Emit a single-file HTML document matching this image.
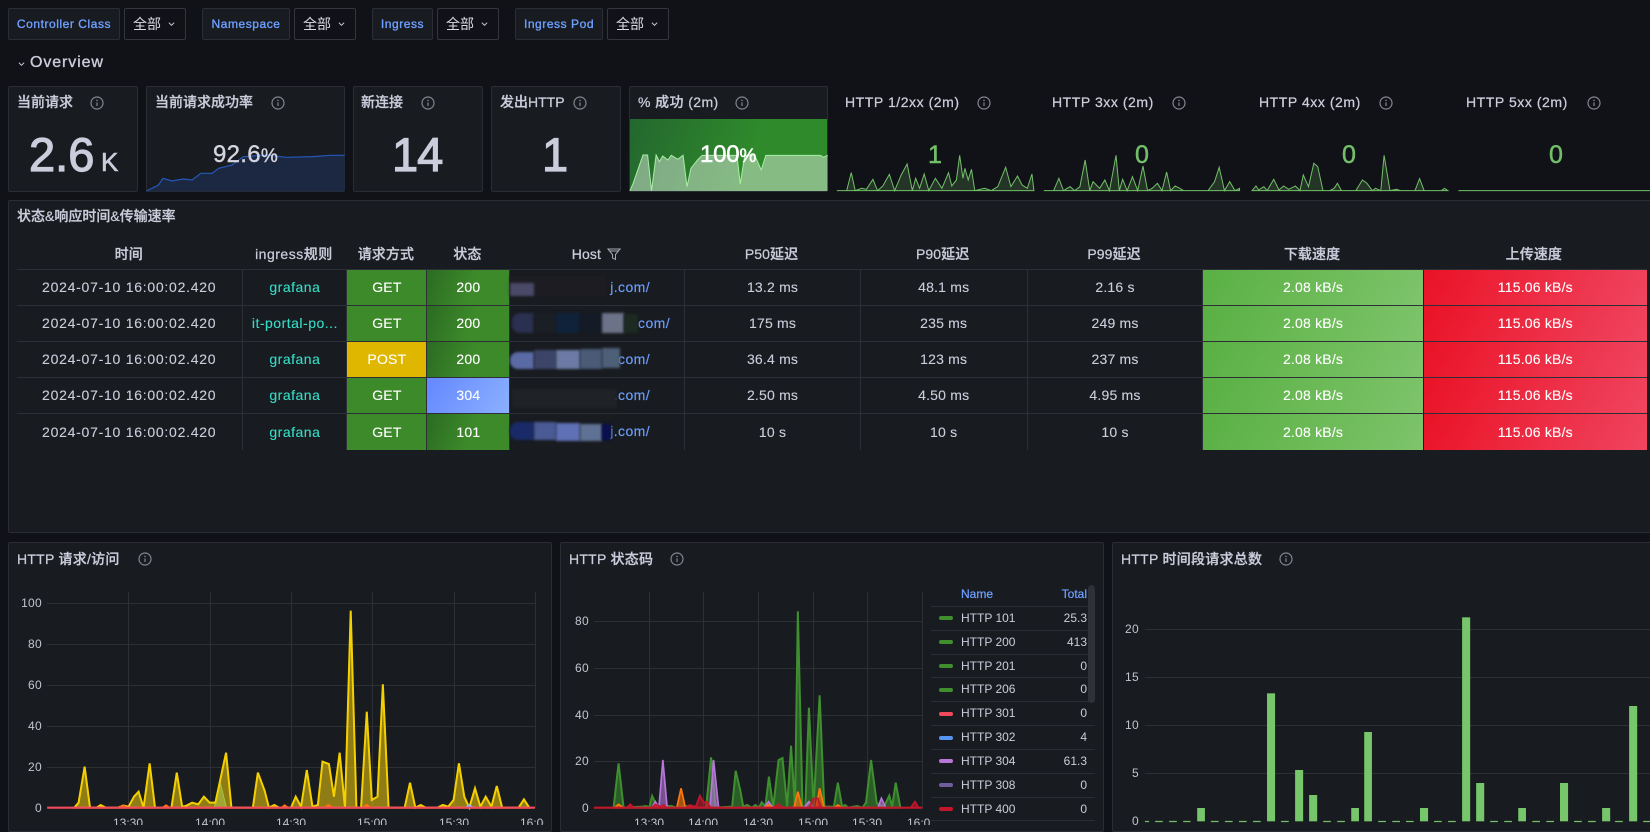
<!DOCTYPE html>
<html lang="zh"><head><meta charset="utf-8"><title>Ingress Overview</title>
<style>
*{box-sizing:border-box}
html,body{margin:0;padding:0;width:1650px;height:825px;overflow:hidden;background:#111217;color:#ccccdc;font-family:"Liberation Sans","Noto Sans CJK SC",sans-serif;font-size:14px}
.a{position:absolute;white-space:nowrap}
.lab{position:absolute;top:8px;height:32px;background:#181b1f;border:1px solid #2b2e34;border-radius:2px;color:#6e9fff;font-size:12px;line-height:30px;text-align:center;-webkit-text-stroke:.35px #6e9fff;letter-spacing:.55px}
.sel{position:absolute;top:8px;height:32px;background:#111217;border:1px solid #33363c;border-radius:2px;color:#dcdce4;font-size:14px;line-height:30px;padding-left:8px}
.sel svg{position:absolute;right:10px;top:12px}
.panel{position:absolute;background:#181b1f;border:1px solid #2a2d33;border-radius:2px}
.t{position:absolute;font-size:14px;font-weight:500;color:#ccccdc;white-space:nowrap;line-height:18px;letter-spacing:.4px;-webkit-text-stroke:.25px #ccccdc}
.big{position:absolute;white-space:nowrap;font-size:47px;line-height:48px;color:#ccccdc;-webkit-text-stroke:1.2px #ccccdc}
.v{position:absolute;font-size:25px;line-height:28px;color:#73bf69;-webkit-text-stroke:.5px #73bf69}
table{position:absolute;left:17px;top:238px;border-collapse:separate;border-spacing:0;table-layout:fixed;width:1630px}
th{height:32px;border-bottom:1px solid #2c2f35;font-weight:500;color:#ccccdc;font-size:14px;padding:0 3px 0 0;text-align:center;letter-spacing:.1px;-webkit-text-stroke:.25px #ccccdc}
td{height:36px;border-bottom:1px solid #2c2f35;border-right:1px solid #2c2f35;text-align:center;padding:0 0 1px;font-size:14px;color:#ccccdc;letter-spacing:.2px;white-space:nowrap;overflow:hidden;-webkit-text-stroke:.12px currentColor}
tr:last-child td{border-bottom:0}
td.tm{letter-spacing:.74px;padding-right:1px}
td.ing{color:#37dcc6;letter-spacing:.5px}
td.g{background:#3d8a2a;color:#fff}
td.y{background:#dfb700;color:#fff}
td.s{background:linear-gradient(110deg,#2b6b22,#3d8a2a 55%);color:#fff}
td.b{background:linear-gradient(120deg,#6488ff,#8bb0ff);color:#fff}
td.d{background:linear-gradient(120deg,#59b043,#7ec46b);color:#fff;border-right-color:#181b1f}
td.u{background:linear-gradient(120deg,#ea1226,#f04560);color:#fff;border-right:0}
.url{position:absolute;color:#6e9fff;font-size:14px;letter-spacing:.4px;text-align:right;line-height:18px;white-space:nowrap;-webkit-text-stroke:.15px #6e9fff}
.bl{position:absolute;filter:blur(1.2px)}
.axis{font-size:12px;fill:#c4c4d0;font-family:"Liberation Sans",sans-serif}
.lg{position:absolute;font-size:12px;color:#ccccdc;line-height:14px;white-space:nowrap}
.ln{position:absolute;left:931px;width:164px;height:1px;background:#2a2d33}
.sw{position:absolute;left:939px;width:14px;height:4px;border-radius:2px}
</style></head><body>

<div class="lab" style="left:8px;width:112px">Controller Class</div>
<div class="sel" style="left:124px;width:62px">全部<svg width="7" height="6" viewBox="0 0 8 6"><path d="M1 1.5 4 4.5 7 1.5" fill="none" stroke="#ccccdc" stroke-width="1.2"/></svg></div>
<div class="lab" style="left:202px;width:88px">Namespace</div>
<div class="sel" style="left:294px;width:62px">全部<svg width="7" height="6" viewBox="0 0 8 6"><path d="M1 1.5 4 4.5 7 1.5" fill="none" stroke="#ccccdc" stroke-width="1.2"/></svg></div>
<div class="lab" style="left:372px;width:61px">Ingress</div>
<div class="sel" style="left:437px;width:62px">全部<svg width="7" height="6" viewBox="0 0 8 6"><path d="M1 1.5 4 4.5 7 1.5" fill="none" stroke="#ccccdc" stroke-width="1.2"/></svg></div>
<div class="lab" style="left:515px;width:88px">Ingress Pod</div>
<div class="sel" style="left:607px;width:62px">全部<svg width="7" height="6" viewBox="0 0 8 6"><path d="M1 1.5 4 4.5 7 1.5" fill="none" stroke="#ccccdc" stroke-width="1.2"/></svg></div>

<svg class="a" style="left:18px;top:61px" width="7" height="6" viewBox="0 0 8 6"><path d="M1 1.5 4 4.5 7 1.5" fill="none" stroke="#ccccdc" stroke-width="1.2"/></svg>
<div class="a" style="left:30px;top:53px;font-size:16px;line-height:20px;letter-spacing:.9px;-webkit-text-stroke:.35px #ccccdc">Overview</div>

<div class="panel" style="left:8px;top:86px;width:130px;height:106px"></div>
<div class="panel" style="left:146px;top:86px;width:199px;height:106px"></div>
<div class="panel" style="left:353px;top:86px;width:130px;height:106px"></div>
<div class="panel" style="left:491px;top:86px;width:130px;height:106px"></div>
<div class="panel" style="left:629px;top:86px;width:199px;height:106px"></div>
<div class="a" style="left:630px;top:119px;width:197px;height:72px;background:linear-gradient(110deg,#23672f,#2f8a2b 60%)"></div>

<div class="t" style="left:17px;top:93px;letter-spacing:0">当前请求</div>
<div class="t" style="left:155px;top:93px;letter-spacing:0">当前请求成功率</div>
<div class="t" style="left:361px;top:93px;letter-spacing:0">新连接</div>
<div class="t" style="left:500px;top:93px;letter-spacing:0;width:64px;overflow:hidden">发出HTTP</div>
<div class="t" style="left:638px;top:93px;">% 成功 (2m)</div>
<div class="t" style="left:845px;top:93px;letter-spacing:.55px">HTTP 1/2xx (2m)</div>
<div class="t" style="left:1052px;top:93px;letter-spacing:.55px">HTTP 3xx (2m)</div>
<div class="t" style="left:1259px;top:93px;letter-spacing:.55px">HTTP 4xx (2m)</div>
<div class="t" style="left:1466px;top:93px;letter-spacing:.55px">HTTP 5xx (2m)</div>

<div class="panel" style="left:8px;top:200px;width:1650px;height:333px"></div>
<div class="t" style="left:17px;top:207px;letter-spacing:0">状态&amp;响应时间&amp;传输速率</div>

<table>
<colgroup><col style="width:226.4px"><col style="width:104px"><col style="width:80px"><col style="width:83px"><col style="width:175px"><col style="width:175.3px"><col style="width:167px"><col style="width:175.7px"><col style="width:220.3px"><col style="width:223.3px"></colgroup>
<tr><th>时间</th><th style="letter-spacing:.5px">ingress规则</th><th>请求方式</th><th>状态</th><th>Host<svg style="margin-left:6px;vertical-align:-2px" width="14" height="14" viewBox="0 0 14 14"><path d="M1 2h12L8.5 7.5V12.5L5.5 11V7.5Z M2.8 4h8.4" fill="none" stroke="#a8a8b4" stroke-width="1"/></svg></th><th>P50延迟</th><th>P90延迟</th><th>P99延迟</th><th>下载速度</th><th>上传速度</th></tr>
<tr><td class="tm">2024-07-10 16:00:02.420</td><td class="ing">grafana</td><td class="g">GET</td><td class="s">200</td><td></td><td>13.2 ms</td><td>48.1 ms</td><td>2.16 s</td><td class="d">2.08 kB/s</td><td class="u">115.06 kB/s</td></tr>
<tr><td class="tm">2024-07-10 16:00:02.420</td><td class="ing">it-portal-po...</td><td class="g">GET</td><td class="s">200</td><td></td><td>175 ms</td><td>235 ms</td><td>249 ms</td><td class="d">2.08 kB/s</td><td class="u">115.06 kB/s</td></tr>
<tr><td class="tm">2024-07-10 16:00:02.420</td><td class="ing">grafana</td><td class="y">POST</td><td class="s">200</td><td></td><td>36.4 ms</td><td>123 ms</td><td>237 ms</td><td class="d">2.08 kB/s</td><td class="u">115.06 kB/s</td></tr>
<tr><td class="tm">2024-07-10 16:00:02.420</td><td class="ing">grafana</td><td class="g">GET</td><td class="b">304</td><td></td><td>2.50 ms</td><td>4.50 ms</td><td>4.95 ms</td><td class="d">2.08 kB/s</td><td class="u">115.06 kB/s</td></tr>
<tr><td class="tm">2024-07-10 16:00:02.420</td><td class="ing">grafana</td><td class="g">GET</td><td class="s">101</td><td></td><td>10 s</td><td>10 s</td><td>10 s</td><td class="d">2.08 kB/s</td><td class="u">115.06 kB/s</td></tr>
</table>

<div class="url" style="right:1000px;top:278px">j.com/</div>
<div class="url" style="right:980px;top:314px">.com/</div>
<div class="url" style="right:1000px;top:350px">.com/</div>
<div class="url" style="right:1000px;top:386px">.com/</div>
<div class="url" style="right:1000px;top:422px">j.com/</div>

<div class="bl" style="left:510px;top:276px;width:96px;height:20px;background:#1d1c23"></div>
<div class="bl" style="left:510px;top:283px;width:24px;height:13px;background:#4a4a68"></div>
<div class="bl" style="left:512px;top:313px;width:22px;height:20px;background:#2a3050;border-radius:8px 0 0 8px"></div>
<div class="bl" style="left:534px;top:313px;width:22px;height:20px;background:#1a1e25"></div>
<div class="bl" style="left:556px;top:313px;width:24px;height:20px;background:#10223a"></div>
<div class="bl" style="left:580px;top:313px;width:22px;height:20px;background:#141a26"></div>
<div class="bl" style="left:602px;top:313px;width:22px;height:20px;background:#6c7388"></div>
<div class="bl" style="left:624px;top:314px;width:14px;height:19px;background:#1c2a22"></div>
<div class="bl" style="left:510px;top:352px;width:24px;height:17px;background:#5a6aa5;border-radius:8px 0 0 8px"></div>
<div class="bl" style="left:534px;top:350px;width:22px;height:19px;background:#3c4568"></div>
<div class="bl" style="left:556px;top:350px;width:24px;height:19px;background:#6c7ba5"></div>
<div class="bl" style="left:580px;top:349px;width:22px;height:20px;background:#4a5b78"></div>
<div class="bl" style="left:602px;top:348px;width:18px;height:20px;background:#4d6078"></div>
<div class="bl" style="left:512px;top:389px;width:105px;height:19px;background:#1f2227"></div>
<div class="bl" style="left:510px;top:422px;width:24px;height:18px;background:#1a2a68;border-radius:8px 0 0 8px"></div>
<div class="bl" style="left:534px;top:422px;width:22px;height:18px;background:#4a5a95"></div>
<div class="bl" style="left:556px;top:423px;width:24px;height:18px;background:#5f70b5"></div>
<div class="bl" style="left:580px;top:424px;width:22px;height:17px;background:#5f7295"></div>
<div class="bl" style="left:602px;top:424px;width:9px;height:16px;background:#0a1050"></div>

<div class="panel" style="left:8px;top:542px;width:544px;height:290px"></div>
<div class="panel" style="left:560px;top:542px;width:544px;height:290px"></div>
<div class="panel" style="left:1112px;top:542px;width:546px;height:290px"></div>
<div class="t" style="left:17px;top:550px;letter-spacing:.25px">HTTP 请求/访问</div>
<div class="t" style="left:569px;top:550px;letter-spacing:.25px">HTTP 状态码</div>
<div class="t" style="left:1121px;top:550px;letter-spacing:.25px">HTTP 时间段请求总数</div>

<svg class="a" style="left:0;top:0" width="1650" height="825" viewBox="0 0 1650 825">
<defs>
<clipPath id="ca"><rect x="0" y="540" width="544" height="285"/></clipPath>
<clipPath id="cb"><rect x="560" y="540" width="370" height="285"/></clipPath>
<g id="inf"><circle r="6" fill="none" stroke="#85858f" stroke-width="1.2"/><path d="M0 -.6V3" stroke="#85858f" stroke-width="1.2"/><circle cy="-2.6" r=".8" fill="#85858f"/></g>
</defs>
<g><use href="#inf" x="97" y="103"/><use href="#inf" x="278" y="103"/><use href="#inf" x="428" y="103"/><use href="#inf" x="580" y="103"/><use href="#inf" x="742" y="103"/><use href="#inf" x="984" y="103"/><use href="#inf" x="1179" y="103"/><use href="#inf" x="1386" y="103"/><use href="#inf" x="1594" y="103"/><use href="#inf" x="145" y="559"/><use href="#inf" x="677" y="559"/><use href="#inf" x="1286" y="559"/></g>

<!-- stat sparkline blue -->
<g transform="scale(.4464,.3333)">
<polygon points="328,573 355,555 365,535 385,543 410,537 430,540 450,520 475,520 490,505 520,495 545,470 600,465 640,472 700,470 740,466 772,466 772,574 328,574" fill="#1c2842"/>
<polyline points="328,573 355,555 365,535 385,543 410,537 430,540 450,520 475,520 490,505 520,495 545,470 600,465 640,472 700,470 740,466 772,466" fill="none" stroke="#2458b8" stroke-width="1.2" vector-effect="non-scaling-stroke"/>
</g>

<!-- success panel + sparks -->
<g transform="translate(620,80) scale(.657,.3333)">
<polygon points="15,333 20,310 35,225 42,225 48,333 55,225 60,245 65,228 73,240 78,226 88,238 96,226 102,320 108,265 118,240 125,226 178,226 183,312 190,226 205,226 215,270 222,226 305,226 310,232 316,226 316,333" fill="#fff" fill-opacity=".42"/>
<polyline points="15,333 20,310 35,225 42,225 48,333 55,225 60,245 65,228 73,240 78,226 88,238 96,226 102,320 108,265 118,240 125,226 178,226 183,312 190,226 205,226 215,270 222,226 305,226 310,232 316,226" fill="none" stroke="#a9eea5" stroke-width="1" vector-effect="non-scaling-stroke"/>
<g fill="#73bf69" fill-opacity=".2" stroke="#73bf69" stroke-width="1" vector-effect="non-scaling-stroke">
<polygon vector-effect="non-scaling-stroke" points="330,332 345,332 352,278 358,332 368,325 375,328 385,298 392,332 400,318 410,283 418,332 428,285 437,252 445,332 450,295 456,325 463,282 470,332 480,295 490,325 500,278 505,318 512,300 517,226 522,295 525,265 530,300 535,268 540,332 555,325 565,332 575,320 587,262 595,320 605,288 612,315 620,325 627,282 630,332"/>
<polygon vector-effect="non-scaling-stroke" points="645,332 660,332 668,295 675,332 685,320 692,332 700,320 708,240 715,332 720,305 730,325 738,300 745,332 755,226 760,332 765,298 772,332 780,290 788,332 796,258 803,332 810,325 818,310 825,332 832,276 838,332 845,318 852,325 858,332 895,332 905,305 912,262 920,332 928,305 936,332 943,325 943,332"/>
<polygon vector-effect="non-scaling-stroke" points="962,332 968,318 972,330 980,320 985,332 995,298 1003,330 1010,318 1018,328 1028,318 1035,332 1040,285 1048,320 1056,250 1062,260 1070,332 1080,332 1087,325 1092,310 1098,332 1120,332 1130,300 1137,310 1145,332 1150,325 1158,332 1163,226 1172,332 1182,328 1188,332 1210,332 1217,296 1224,332 1250,332 1255,325 1260,332"/>
<polyline vector-effect="non-scaling-stroke" points="1276,332 1568,332" fill="none"/>
</g>
</g>

<!-- Chart A -->
<g stroke="#2c2f34" stroke-width="1">
<path d="M47 603.5H535M47 644.5H535M47 685.5H535M47 726.5H535M47 767.5H535M128.5 592V808M210.5 592V808M291.5 592V808M372.5 592V808M454.5 592V808M535.5 592V808"/>
</g>
<g clip-path="url(#ca)"><g transform="translate(0,540) scale(.35714,.33333)">
<polygon points="600,803 617,730 634,803" fill="#5ec08f" fill-opacity=".55" stroke="#45c07a" stroke-width="1" vector-effect="non-scaling-stroke"/>
<polygon points="208,803 220,788 237,680 252,803 270,803 282,795 296,803 330,803 345,797 360,800 375,770 388,755 402,803 419,670 434,803 480,803 495,698 510,800 522,797 538,788 555,793 571,770 587,788 603,788 633,638 648,803 708,803 722,698 741,752 753,803 768,795 781,803 815,803 828,770 843,800 859,690 875,800 890,795 903,665 921,672 935,770 951,638 966,803 982,212 998,803 1011,803 1027,515 1041,780 1057,770 1072,433 1088,803 1133,803 1148,728 1163,803 1178,795 1192,803 1225,803 1240,795 1255,800 1270,780 1285,670 1300,770 1314,803 1330,745 1345,800 1360,770 1376,800 1391,738 1406,803 1452,803 1467,778 1482,803" fill="#f2cc0c" fill-opacity=".55" stroke="#f5d000" stroke-width="2" vector-effect="non-scaling-stroke"/>
<g fill="#ff780a" stroke="#ff780a" stroke-width="1" vector-effect="non-scaling-stroke"><polygon points="330,803 345,793 358,803"/><polygon points="452,803 465,793 478,803"/><polygon points="785,803 797,793 810,803"/><polygon points="905,803 920,792 935,803"/><polygon points="1012,803 1027,792 1042,803"/></g>
<polygon points="1300,803 1314,792 1328,803" fill="#8ab8ff"/>
<line x1="132" y1="803" x2="1498" y2="803" stroke="#f2495c" stroke-width="2.2" vector-effect="non-scaling-stroke"/>
</g>
<g class="axis" text-anchor="middle"><text x="128" y="827">13:30</text><text x="210" y="827">14:00</text><text x="291" y="827">14:30</text><text x="372" y="827">15:00</text><text x="454" y="827">15:30</text><text x="535" y="827">16:00</text></g>
</g>
<g class="axis" text-anchor="end" letter-spacing=".3"><text x="42" y="607">100</text><text x="42" y="648">80</text><text x="42" y="689">60</text><text x="42" y="730">40</text><text x="42" y="771">20</text><text x="42" y="812">0</text></g>

<!-- Chart B -->
<g stroke="#2c2f34" stroke-width="1">
<path d="M594 621.5H922M594 668.5H922M594 715.5H922M594 761.5H922M649.5 592V808M703.5 592V808M758.5 592V808M813.5 592V808M867.5 592V808M922.5 592V808"/>
</g>
<g clip-path="url(#cb)"><g transform="translate(550,540) scale(.35714,.33333)">
<polygon points="178,803 192,670 206,803 258,800 270,798 278,803 286,768 300,800 340,798 354,803 395,797 410,803 437,803 451,652 464,803 510,800 520,692 533,752 541,800 552,795 565,803 575,795 585,803 593,787 603,800 613,710 625,803 640,660 651,654 664,800 675,617 686,800 694,214 707,800 715,800 725,503 738,800 755,466 768,800 795,800 806,728 818,800 826,795 835,803 860,798 875,803 885,787 899,660 915,790 935,800 950,767 958,800 968,728 981,803" fill="#37872d" fill-opacity=".62" stroke="#3f8f30" stroke-width="2" vector-effect="non-scaling-stroke"/>
<g fill="#b877d9" fill-opacity=".6" stroke="#b877d9" stroke-width="1.7"><polygon vector-effect="non-scaling-stroke" points="285,803 295,785 305,803"/><polygon vector-effect="non-scaling-stroke" points="305,803 316,660 328,803"/><polygon vector-effect="non-scaling-stroke" points="448,803 458,660 472,803"/><polygon vector-effect="non-scaling-stroke" points="600,803 612,785 624,803"/><polygon vector-effect="non-scaling-stroke" points="712,803 725,785 738,803"/><polygon vector-effect="non-scaling-stroke" points="918,803 928,775 940,803"/></g>
<g fill="#ff780a" fill-opacity=".6" stroke="#ff780a" stroke-width="1.7"><polygon vector-effect="non-scaling-stroke" points="180,803 192,793 205,803"/><polygon vector-effect="non-scaling-stroke" points="355,803 367,745 379,803"/><polygon vector-effect="non-scaling-stroke" points="683,803 694,755 706,803"/><polygon vector-effect="non-scaling-stroke" points="745,803 755,745 768,803"/><polygon vector-effect="non-scaling-stroke" points="795,803 806,795 818,803"/><polygon vector-effect="non-scaling-stroke" points="600,803 612,795 624,803"/></g>
<g fill="#c4162a" fill-opacity=".6" stroke="#c4162a" stroke-width="1.7"><polygon vector-effect="non-scaling-stroke" points="215,803 225,793 235,803"/><polygon vector-effect="non-scaling-stroke" points="285,803 295,793 310,800 318,795 328,803"/><polygon vector-effect="non-scaling-stroke" points="380,803 390,795 408,800 420,767 430,787 440,785 450,803"/><polygon vector-effect="non-scaling-stroke" points="625,803 640,793 652,803"/><polygon vector-effect="non-scaling-stroke" points="725,803 738,775 750,775 760,803"/><polygon vector-effect="non-scaling-stroke" points="1010,803 1022,785 1032,803"/></g>
<line x1="123" y1="803" x2="1043" y2="803" stroke="#c4162a" stroke-width="2.2" vector-effect="non-scaling-stroke"/>
</g>
<g class="axis" text-anchor="middle"><text x="649" y="827">13:30</text><text x="703" y="827">14:00</text><text x="758" y="827">14:30</text><text x="813" y="827">15:00</text><text x="867" y="827">15:30</text><text x="922" y="827">16:00</text></g>
</g>
<g class="axis" text-anchor="end" letter-spacing=".3"><text x="589" y="625">80</text><text x="589" y="672">60</text><text x="589" y="719">40</text><text x="589" y="765">20</text><text x="589" y="812">0</text></g>

<!-- Chart C -->
<path d="M1145 629.5H1650M1145 677.5H1650M1145 725.5H1650M1145 773.5H1650" stroke="#2c2f34" stroke-width="1"/>
<g transform="translate(1100,540) scale(.35088,.33333)" fill="#78c66b">
<rect x="277" y="804" width="22" height="40"/><rect x="476" y="460" width="23" height="384"/><rect x="556" y="690" width="23" height="154"/><rect x="596" y="765" width="23" height="79"/><rect x="716" y="804" width="22" height="40"/><rect x="753" y="576" width="22" height="268"/><rect x="912" y="804" width="23" height="40"/><rect x="1032" y="232" width="23" height="612"/><rect x="1072" y="729" width="23" height="115"/><rect x="1192" y="804" width="22" height="40"/><rect x="1311" y="729" width="23" height="115"/><rect x="1431" y="804" width="23" height="40"/><rect x="1508" y="498" width="23" height="346"/>
<path d="M128 844.5h12M157 844.5h22M197 844.5h22M237 844.5h21M316 844.5h22M356 844.5h22M396 844.5h22M436 844.5h22M516 844.5h22M636 844.5h22M676 844.5h22M793 844.5h22M833 844.5h22M872 844.5h22M952 844.5h22M992 844.5h22M1112 844.5h22M1152 844.5h22M1232 844.5h22M1272 844.5h22M1351 844.5h22M1391 844.5h22M1468 844.5h22M1548 844.5h22" stroke="#73bf69" stroke-width="1.2" vector-effect="non-scaling-stroke"/>
</g>
<g class="axis" text-anchor="end" letter-spacing=".3"><text x="1139" y="633">20</text><text x="1139" y="681">15</text><text x="1139" y="729">10</text><text x="1139" y="777">5</text><text x="1139" y="825">0</text></g>
</svg>

<!-- values -->
<div class="big" style="left:29px;top:131px">2.6</div>
<div class="a" style="left:101px;top:147px;font-size:26px;line-height:30px;color:#ccccdc;-webkit-text-stroke:.6px #ccccdc">K</div>
<div class="big" style="left:392px;top:131px;letter-spacing:-1px">14</div>
<div class="big" style="left:542px;top:131px">1</div>
<div class="a" style="left:213px;top:141px;font-size:24px;line-height:28px;color:#d4d4de;letter-spacing:.3px;-webkit-text-stroke:.4px #d4d4de">92.6<span style="font-size:19px">%</span></div>
<div class="a" style="left:700px;top:141px;font-size:24px;line-height:28px;color:#fff;-webkit-text-stroke:.5px #fff;letter-spacing:-.2px">100<span style="font-size:19px">%</span></div>
<div class="v" style="left:928px;top:141px">1</div>
<div class="v" style="left:1135px;top:141px">0</div>
<div class="v" style="left:1342px;top:141px">0</div>
<div class="v" style="left:1549px;top:141px">0</div>

<!-- legend -->
<div class="lg" style="left:961px;top:587px;color:#6e9fff;-webkit-text-stroke:.25px #6e9fff">Name</div>
<div class="lg" style="right:563px;top:587px;color:#6e9fff;-webkit-text-stroke:.25px #6e9fff">Total</div>
<div class="ln" style="top:606px"></div><div class="ln" style="top:630px"></div><div class="ln" style="top:654px"></div><div class="ln" style="top:677px"></div><div class="ln" style="top:701px"></div><div class="ln" style="top:725px"></div><div class="ln" style="top:749px"></div><div class="ln" style="top:773px"></div><div class="ln" style="top:797px"></div><div class="ln" style="top:820px"></div>
<div class="sw" style="top:616px;background:#3f8f2f"></div><div class="lg" style="left:961px;top:611px">HTTP 101</div><div class="lg" style="right:563px;top:611px">25.3</div>
<div class="sw" style="top:640px;background:#3f8f2f"></div><div class="lg" style="left:961px;top:635px">HTTP 200</div><div class="lg" style="right:563px;top:635px">413</div>
<div class="sw" style="top:664px;background:#3f8f2f"></div><div class="lg" style="left:961px;top:659px">HTTP 201</div><div class="lg" style="right:563px;top:659px">0</div>
<div class="sw" style="top:688px;background:#3f8f2f"></div><div class="lg" style="left:961px;top:682px">HTTP 206</div><div class="lg" style="right:563px;top:682px">0</div>
<div class="sw" style="top:712px;background:#f2495c"></div><div class="lg" style="left:961px;top:706px">HTTP 301</div><div class="lg" style="right:563px;top:706px">0</div>
<div class="sw" style="top:736px;background:#5794f2"></div><div class="lg" style="left:961px;top:730px">HTTP 302</div><div class="lg" style="right:563px;top:730px">4</div>
<div class="sw" style="top:759px;background:#b877d9"></div><div class="lg" style="left:961px;top:754px">HTTP 304</div><div class="lg" style="right:563px;top:754px">61.3</div>
<div class="sw" style="top:783px;background:#705da0"></div><div class="lg" style="left:961px;top:778px">HTTP 308</div><div class="lg" style="right:563px;top:778px">0</div>
<div class="sw" style="top:807px;background:#c4162a"></div><div class="lg" style="left:961px;top:802px">HTTP 400</div><div class="lg" style="right:563px;top:802px">0</div>
<div class="a" style="left:1088px;top:585px;width:7px;height:118px;border-radius:4px;background:#2e3138"></div>

</body></html>
